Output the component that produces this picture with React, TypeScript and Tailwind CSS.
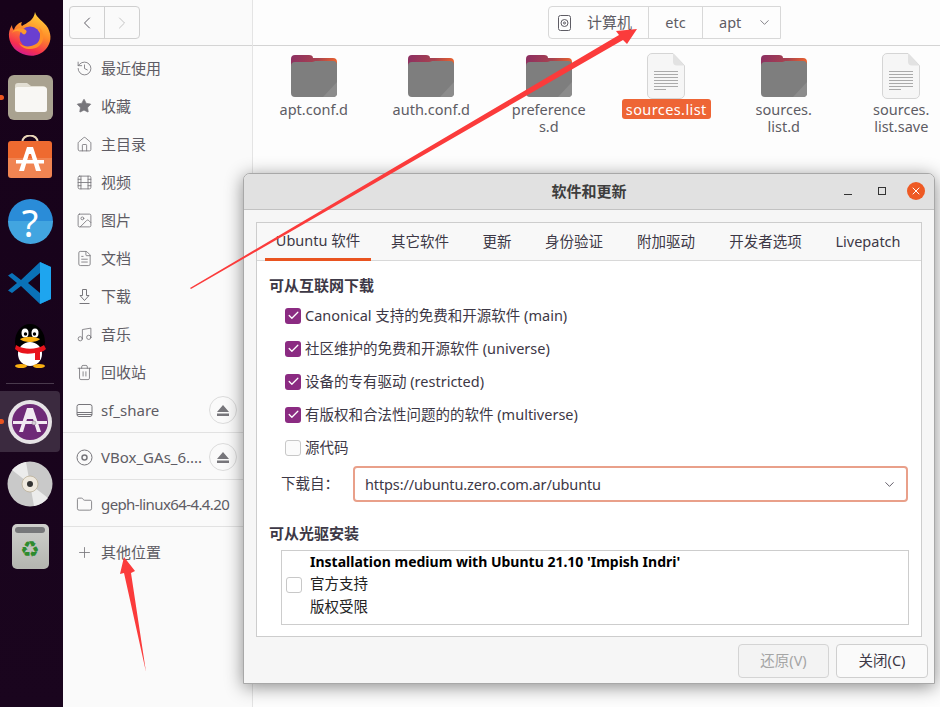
import { History, Star, Home, Film, Image, FileText, Music, Trash2, Folder, Plus, ChevronLeft, ChevronRight, ChevronDown, Check, X } from 'lucide-react'

const cjk = '"Noto Sans", "Noto Sans CJK SC", sans-serif'

function Firefox() {
  return (
    <svg width="44" height="46" viewBox="0 0 44 46">
      <defs>
        <linearGradient id="ff1" x1="0.7" y1="0" x2="0.3" y2="1">
          <stop offset="0" stopColor="#ffd53c" />
          <stop offset="0.45" stopColor="#ff8a2a" />
          <stop offset="0.8" stopColor="#f5304f" />
          <stop offset="1" stopColor="#c9189b" />
        </linearGradient>
      </defs>
      <path d="M27 1c1 6 9 9 13 16 4 8 3 15-2 21-5 6-13 8-20 6C9 42 2 35 1 26c-.5-4 .5-8 3-12 0 3 1 4 2 5 1-4 4-7 8-8-1 2-1 3 0 4 5-3 12-6 13-14z" fill="url(#ff1)" />
      <circle cx="22" cy="26" r="10.5" fill="#6a3fd0" />
      <path d="M13 21c-4-2-7-1-9 1 2-4 7-6 12-4 3 1 3 3 2 4-1 2-3 2-5-1z" fill="#ff9a2c" />
      <path d="M31 16c3 3 5 7 4 12-1 6-6 10-13 10-5 0-9-2-11-6 3 3 8 4 12 3 5-1 9-4 9-10 0-4 0-6-1-9z" fill="#ff8f28" />
    </svg>
  )
}

function FilesIcon() {
  return (
    <div className="w-[45px] h-[45px] rounded-[6px] bg-[#a9a290] flex items-center justify-center">
      <svg width="33" height="30" viewBox="0 0 33 30">
        <path d="M1 3a3 3 0 0 1 3-3h9l4 3h12a3 3 0 0 1 3 3v5H1z" fill="#e2ded3" />
        <rect x="1" y="4" width="32" height="25" rx="2.5" fill="#f8f7f4" />
      </svg>
    </div>
  )
}

function SoftwareIcon() {
  return (
    <svg width="46" height="43" viewBox="0 0 46 43">
      <path d="M15 8c0-10 16-10 16 0" fill="none" stroke="#e9d6b8" strokeWidth="2" />
      <path d="M1 9a3 3 0 0 1 3-3h38a3 3 0 0 1 3 3v15H1z" fill="#ee6a30" />
      <path d="M1 23h44v17a3 3 0 0 1-3 3H4a3 3 0 0 1-3-3z" fill="#f08452" />
      <path d="M20 12h6l8 24h-5l-5-17h-2l-5 17h-5z" fill="#fff" />
      <rect x="9" y="25" width="28" height="3.5" fill="#fff" />
    </svg>
  )
}

function HelpIcon() {
  return (
    <div className="w-[45px] h-[45px] rounded-full bg-[linear-gradient(#2a8cd8_50%,#42a5e0_50%)] flex items-center justify-center">
      <span className="text-white text-[38px] leading-none" style={{ fontFamily: cjk }}>?</span>
    </div>
  )
}

function VSCode() {
  return (
    <svg width="44" height="44" viewBox="0 0 44 44">
      <path d="M32 1 43 6v32l-11 5L13 25 4 32 0 29.500 9 22 0 14.500 4 12l9 7z" fill="#0a72b8" />
      <path d="M32 1 43 6v32l-11 5z" fill="#1ea5ef" />
      <path d="M32 12 20 22l12 10z" fill="#17021a" />
    </svg>
  )
}

function QQ() {
  return (
    <svg width="38" height="46" viewBox="0 0 38 46">
      <ellipse cx="19" cy="20" rx="15" ry="18" fill="#000" />
      <ellipse cx="19" cy="32" rx="12" ry="12" fill="#fff" />
      <ellipse cx="14" cy="11" rx="3.500" ry="4.500" fill="#fff" />
      <ellipse cx="24" cy="11" rx="3.500" ry="4.500" fill="#fff" />
      <circle cx="14.500" cy="12" r="1.700" fill="#000" />
      <circle cx="23.500" cy="12" r="1.700" fill="#000" />
      <path d="M9 17c6-3 14-3 20 0-3 4-17 4-20 0z" fill="#f9b012" />
      <path d="M5 23c8 5 20 5 28 0l2 4c-2 2-4 3-6 3v8h-5v-7c-6 1-12 1-16-1l-4-3z" fill="#e8141c" />
      <ellipse cx="10" cy="44" rx="6" ry="2" fill="#f9b012" />
      <ellipse cx="28" cy="44" rx="6" ry="2" fill="#f9b012" />
    </svg>
  )
}

function UpdatesIcon() {
  return (
    <svg width="46" height="46" viewBox="0 0 46 46">
      <circle cx="23" cy="23" r="22" fill="#e6e3e6" />
      <circle cx="23" cy="23" r="18" fill="#6e2a77" />
      <path d="M20 9h6l8 24h-4l-4-13h-6l-4 13h-4z" fill="#f2eaf2" />
      <rect x="6" y="22" width="34" height="3" fill="#f2eaf2" />
      <circle cx="27" cy="24" r="2" fill="#d8d0d8" stroke="#8a7a8a" strokeWidth="0.5" />
    </svg>
  )
}

function CdIcon() {
  return (
    <svg width="46" height="46" viewBox="0 0 46 46">
      <circle cx="23" cy="23" r="22.500" fill="#c9c9c9" />
      <path d="M23 23 5 9a23 23 0 0 1 14-8zM23 23 41 37a23 23 0 0 1-14 8z" fill="#ececec" />
      <circle cx="23" cy="23" r="8" fill="#efe9df" stroke="#b5a98f" strokeWidth="0.7" />
      <circle cx="23" cy="23" r="3" fill="#333" />
    </svg>
  )
}

function TrashIcon() {
  return (
    <div className="w-[37px] h-[45px] rounded-[5px] bg-[linear-gradient(#cfd0cc,#b4b5b0)] flex flex-col items-center pt-[3px]">
      <div className="w-[30px] h-[6px] rounded-[3px] bg-[#77787a]" />
      <span className="mt-[5px] text-[#2e8b2e] text-[22px] leading-[24px] font-bold" style={{ fontFamily: '"DejaVu Sans", sans-serif' }}>♻</span>
    </div>
  )
}

function Dock() {
  return (
    <div className="w-[63px] shrink-0 bg-[linear-gradient(#17021a,#1a051e)] relative flex flex-col items-center pt-[11px] pr-[3px]">
      <div className="h-[46px] flex items-center"><Firefox /></div>
      <div className="mt-[18px] h-[45px]"><FilesIcon /></div>
      <div className="mt-[15px] h-[46px]"><SoftwareIcon /></div>
      <div className="mt-[18px] h-[45px]"><HelpIcon /></div>
      <div className="mt-[17px] h-[44px]"><VSCode /></div>
      <div className="mt-[17px] h-[46px]"><QQ /></div>
      <div className="mt-[15px] w-[48px] h-px bg-[#4a3a4d]" />
      <div className="mt-[7px] w-[60px] h-[61px] rounded-r-[4px] bg-[#3b2a3f] flex items-center justify-center"><UpdatesIcon /></div>
      <div className="mt-[9px] h-[46px]"><CdIcon /></div>
      <div className="mt-[17px] h-[45px]"><TrashIcon /></div>
      <span className="absolute left-0 top-[95px] w-[4px] h-[5px] rounded-r-full bg-[#e95420]" />
      <span className="absolute left-0 top-[419px] w-[4px] h-[5px] rounded-r-full bg-[#e95420]" />
    </div>
  )
}

function Eject() {
  return (
    <span className="ml-auto mr-[15px] w-[28px] h-[28px] rounded-full border border-[#dcdcdc] flex items-center justify-center">
      <svg width="12" height="11" viewBox="0 0 12 11" fill="#77767b"><path d="M6 0l6 7H0zM0 8.500h12V11H0z" /></svg>
    </span>
  )
}

function SideRow({ icon, label, eject, cls }: { icon: React.ReactNode; label: string; eject?: boolean; cls?: string }) {
  return (
    <div className="h-[38px] flex items-center pl-[13px] text-[#5e5c64] text-[15px]">
      <span className="w-[25px] flex justify-start text-[#77767b]">{icon}</span>
      <span className={`whitespace-nowrap ${cls ?? ''}`}>{label}</span>
      {eject && <Eject />}
    </div>
  )
}

const DownloadIcon = (
  <svg width="17" height="17" viewBox="0 0 17 17" fill="none" stroke="currentColor" strokeWidth="1">
    <path d="M6.500 1.500h4v6h2.500l-4.500 5-4.500-5h2.500zM3.500 15.500h10" />
  </svg>
)
const DriveIcon = (
  <svg width="17" height="17" viewBox="0 0 17 17" fill="none" stroke="currentColor" strokeWidth="1">
    <rect x="1" y="2.500" width="15" height="12" rx="2" />
    <path d="M1 10.500h15M1 12.500h15" />
  </svg>
)
const DiscIcon = (
  <svg width="17" height="17" viewBox="0 0 17 17" fill="none" stroke="currentColor" strokeWidth="1">
    <circle cx="8.500" cy="8.500" r="7.500" />
    <circle cx="8.500" cy="8.500" r="2.500" strokeWidth="1.500" />
  </svg>
)

function Sidebar() {
  const s = { size: 17, strokeWidth: 1.2 }
  return (
    <div className="w-[190px] shrink-0 bg-[#fafafa] border-r border-[#e4e4e4] flex flex-col">
      <div className="h-[46px] border-b border-[#d4d4d4] flex items-center pl-[6px] shrink-0">
        <div className="w-[71px] h-[33px] border border-[#cfcfcf] rounded-[4px] flex">
          <div className="w-[35px] border-r border-[#cfcfcf] flex items-center justify-center text-[#5e5c64]"><ChevronLeft size={20} strokeWidth={1.2} /></div>
          <div className="flex-1 flex items-center justify-center text-[#c4c4c4]"><ChevronRight size={20} strokeWidth={1.2} /></div>
        </div>
      </div>
      <div className="pt-[3px] flex flex-col">
        <SideRow icon={<History {...s} />} label="最近使用" />
        <SideRow icon={<Star size={16} fill="#77767b" strokeWidth={1} />} label="收藏" />
        <SideRow icon={<Home {...s} />} label="主目录" />
        <SideRow icon={<Film {...s} />} label="视频" />
        <SideRow icon={<Image {...s} />} label="图片" />
        <SideRow icon={<FileText {...s} />} label="文档" />
        <SideRow icon={DownloadIcon} label="下载" />
        <SideRow icon={<Music {...s} />} label="音乐" />
        <SideRow icon={<Trash2 {...s} />} label="回收站" />
        <SideRow icon={DriveIcon} label="sf_share" eject />
        <div className="mt-[3px] h-px bg-[#e2e2e2]" />
        <div className="mt-[5px]"><SideRow icon={DiscIcon} label="VBox_GAs_6...." eject /></div>
        <div className="mt-[3px] h-px bg-[#e2e2e2]" />
        <div className="mt-[5px]"><SideRow icon={<Folder {...s} />} label="geph-linux64-4.4.20" cls="tracking-[-0.6px]" /></div>
        <div className="mt-[3px] h-px bg-[#e2e2e2]" />
        <div className="mt-[6px]"><SideRow icon={<Plus {...s} />} label="其他位置" /></div>
      </div>
    </div>
  )
}

function FolderIcon() {
  return (
    <svg width="46" height="42" viewBox="0 0 46 42">
      <defs>
        <linearGradient id="fold" x1="0" y1="0" x2="1" y2="0.2">
          <stop offset="0" stopColor="#8c2f63" />
          <stop offset="0.6" stopColor="#a8424f" />
          <stop offset="1" stopColor="#e9622f" />
        </linearGradient>
      </defs>
      <path d="M0 4a4 4 0 0 1 4-4h14q4 0 4 3h20a4 4 0 0 1 4 4v12H0z" fill="url(#fold)" />
      <path d="M0 11a4 4 0 0 1 4-4h13q5 0 6-.5t1-.5h18a4 4 0 0 1 4 4v28a4 4 0 0 1-4 4H4a4 4 0 0 1-4-4z" fill="#7e7e7e" />
      <path d="M46 27v11a4 4 0 0 1-4 4H32z" fill="#8c8c8c" />
    </svg>
  )
}

function DocIcon() {
  return (
    <svg width="38" height="46" viewBox="0 0 38 46">
      <path d="M5 .5h21l11.500 12V41a4.500 4.500 0 0 1-4.500 4.500H5A4.500 4.500 0 0 1 .5 41V5A4.500 4.500 0 0 1 5 .5z" fill="#f6f6f6" stroke="#d5d5d5" />
      <path d="M26 .5v8a4 4 0 0 0 4 4h7.500z" fill="#e2e2e2" />
      {[18, 21, 24, 27, 30, 33].map(y => <rect key={y} x="7" y={y} width="24" height="1" fill="#aaaaaa" />)}
      <rect x="7" y="36" width="12" height="1" fill="#aaaaaa" />
    </svg>
  )
}

const files = [
  { name: 'apt.conf.d', dir: true },
  { name: 'auth.conf.d', dir: true },
  { name: 'preference\ns.d', dir: true },
  { name: 'sources.list', dir: false, selected: true },
  { name: 'sources.\nlist.d', dir: true },
  { name: 'sources.\nlist.save', dir: false },
]

function FileGrid() {
  return (
    <div className="grid grid-cols-[repeat(6,117.5px)] pl-[2px]">
      {files.map(f => (
        <div key={f.name} className="flex flex-col items-center">
          <div className="h-[46px] mt-[7px] flex items-center">{f.dir ? <FolderIcon /> : <DocIcon />}</div>
          <div className="w-[100px] flex justify-center">
            <div className={`text-[14.500px] leading-[17px] py-[1.500px] text-center whitespace-pre-line ${f.selected ? 'bg-[#ee6535] text-white rounded-[3px] px-[4px] tracking-[0.4px]' : 'text-[#5e5c64]'}`}>
              {f.name}
            </div>
          </div>
        </div>
      ))}
    </div>
  )
}

function PathBar() {
  return (
    <div className="h-[46px] border-b border-[#d4d4d4] flex items-center pl-[295px]">
      <div className="h-[33px] w-[233px] border border-[#d8d8d8] rounded-l-[4px] flex text-[14.500px] text-[#5e5c64]">
        <div className="w-[100px] border-r border-[#d8d8d8] flex items-center pl-[9px] gap-[16px]">
          <svg className="shrink-0" width="13" height="16" viewBox="0 0 13 16" fill="none" stroke="#5e5c64" strokeWidth="1">
            <rect x="0.500" y="0.500" width="12" height="15" rx="2" />
            <circle cx="6.500" cy="8" r="3.500" />
            <circle cx="6.500" cy="8" r="1" />
          </svg>
          <span className="whitespace-nowrap text-[15px]">计算机</span>
        </div>
        <div className="w-[54px] border-r border-[#d8d8d8] flex items-center justify-center">etc</div>
        <div className="flex-1 flex items-center pl-[16px] gap-[16px]">
          <span>apt</span>
          <ChevronDown size={15} strokeWidth={1.2} />
        </div>
      </div>
    </div>
  )
}

function CheckRow({ label, checked }: { label: string; checked?: boolean }) {
  return (
    <div className="h-[33px] flex items-center pl-[28px]">
      {checked ? (
        <span className="w-[16px] h-[16px] rounded-[3px] bg-[#8b2b82] flex items-center justify-center text-white"><Check size={13} strokeWidth={2.4} /></span>
      ) : (
        <span className="w-[16px] h-[16px] rounded-[3px] border border-[#c8c8c8] bg-[#fbfbfb]" />
      )}
      <span className="ml-[4px] whitespace-nowrap">{label}</span>
    </div>
  )
}

const tabs = [
  { label: '其它软件', w: 'w-[92px]' },
  { label: '更新', w: 'w-[62px]' },
  { label: '身份验证', w: 'w-[92px]' },
  { label: '附加驱动', w: 'w-[92px]' },
  { label: '开发者选项', w: 'w-[107px]' },
  { label: 'Livepatch', w: 'w-[98px]' },
]

function Dialog() {
  return (
    <div className="absolute left-[243px] top-[173px] w-[692px] h-[511px] rounded-t-[7px] bg-[#f6f6f6] border border-[#a8a8a8] shadow-[0_3px_18px_rgba(0,0,0,0.45)] flex flex-col text-[15px] text-[#3d3846]">
      <div className="h-[36px] shrink-0 bg-[#e1e1e1] rounded-t-[6px] border-b border-[#c2c2c2] relative flex items-center justify-center font-bold text-[15px] text-[#3d3d3d]">
        软件和更新
        <span className="absolute left-[600px] top-[20px] w-[8px] h-px bg-[#333]" />
        <span className="absolute left-[634px] top-[13px] w-[8px] h-[8px] border border-[#333]" />
        <span className="absolute left-[663px] top-[8px] w-[18px] h-[18px] rounded-full bg-[#ee5a24] flex items-center justify-center text-white"><X size={12} strokeWidth={2} /></span>
      </div>
      <div className="mt-[12px] mx-[12px] h-[415px] border border-[#cdcdcd] bg-white flex flex-col">
        <div className="h-[38px] shrink-0 border-b border-[#d8d8d8] bg-[#f8f8f8] flex pl-[8px] text-[14.500px]">
          <div className="w-[106px] h-[38px] border-b-[3px] border-[#e95420] flex items-center justify-center">Ubuntu 软件</div>
          <div className="flex ml-[3px]">
            {tabs.map(t => <div key={t.label} className={`${t.w} flex items-center justify-center`}>{t.label}</div>)}
          </div>
        </div>
        <div className="pt-[13px] pl-[12px] font-bold text-[15px] leading-[22px]">可从互联网下载</div>
        <div className="mt-[3px] text-[14.500px]">
          <CheckRow checked label="Canonical 支持的免费和开源软件 (main)" />
          <CheckRow checked label="社区维护的免费和开源软件 (universe)" />
          <CheckRow checked label="设备的专有驱动 (restricted)" />
          <CheckRow checked label="有版权和合法性问题的的软件 (multiverse)" />
          <CheckRow label="源代码" />
        </div>
        <div className="mt-[2px] flex items-center pl-[24px] pr-[13px]">
          <span className="w-[72px] text-[14.500px]">下载自：</span>
          <div className="flex-1 h-[36px] rounded-[4px] border-2 border-[#e9a08a] flex items-center pl-[10px] pr-[9px] pt-[1px] text-[14.500px] tracking-[-0.12px]">
            https://ubuntu.zero.com.ar/ubuntu
            <ChevronDown className="ml-auto" size={15} strokeWidth={1.3} />
          </div>
        </div>
        <div className="mt-[20px] pl-[12px] font-bold text-[15px] leading-[22px]">可从光驱安装</div>
        <div className="mt-[6px] ml-[24px] mr-[12px] h-[75px] border border-[#cdcdcd] flex items-center pl-[4px]">
          <span className="w-[16px] h-[16px] rounded-[3px] border border-[#c8c8c8] shrink-0 -mt-[5px]" />
          <div className="ml-[8px] pb-[5px] text-[14.500px] leading-[23px] text-[#222]">
            <div className="font-bold text-[14px] leading-[20px] text-black">Installation medium with Ubuntu 21.10 'Impish Indri'</div>
            <div>官方支持</div>
            <div>版权受限</div>
          </div>
        </div>
      </div>
      <div className="mt-[7px] flex justify-end gap-[7px] pr-[6px] text-[14.500px]">
        <div className="w-[91px] h-[34px] rounded-[4px] border border-[#d4d4d4] bg-[#f3f3f3] text-[#a5a5a5] flex items-center justify-center">还原(V)</div>
        <div className="w-[92px] h-[34px] rounded-[4px] border border-[#cfcfcf] bg-[#fafafa] flex items-center justify-center">关闭(C)</div>
      </div>
    </div>
  )
}

function Arrows() {
  return (
    <svg className="absolute inset-0 pointer-events-none" width="940" height="707" viewBox="0 0 940 707">
      <polygon points="190,288 191,289 623,40 627,44 637,29 616,31 619,35" fill="#fb3b3b" />
      <polygon points="146,672 131,573 135,571 124,557 120,574 124,573" fill="#fb3b3b" />
    </svg>
  )
}

export default function App() {
  return (
    <div className="w-[940px] h-[707px] relative overflow-hidden flex bg-[#fcfcfc]" style={{ fontFamily: cjk }}>
      <Dock />
      <Sidebar />
      <div className="flex-1 bg-[#fdfdfd]">
        <PathBar />
        <FileGrid />
      </div>
      <Dialog />
      <Arrows />
    </div>
  )
}
